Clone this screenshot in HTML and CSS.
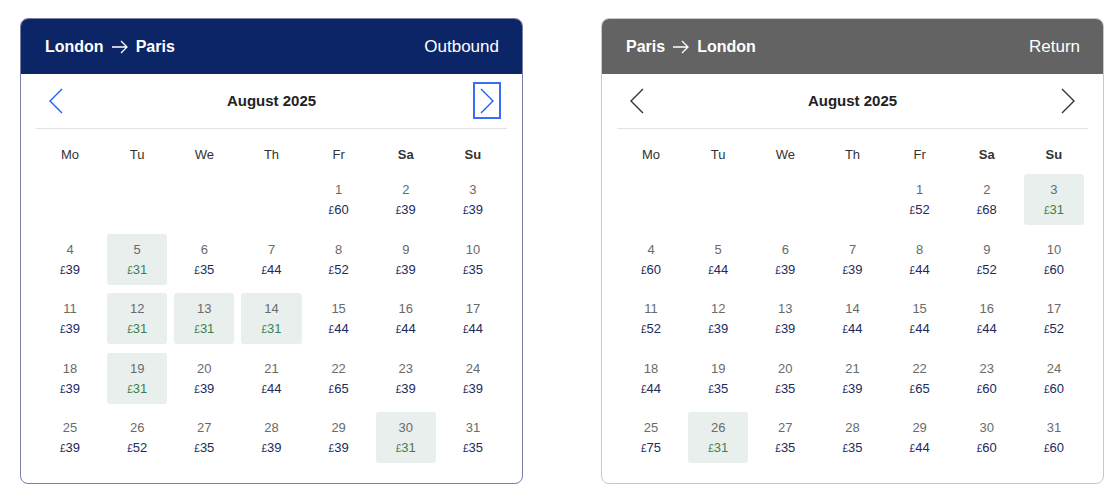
FILE: index.html
```html
<!DOCTYPE html>
<html lang="en">
<head>
    <meta charset="UTF-8">
    <title>Fare calendar</title>
    <link rel="stylesheet" href="styles.css">
</head>
<body>

    <div class="calendars">

        <div class="panel outbound">
            <div class="panel-head">
                <div class="route">London
                    <svg class="route-arrow" width="18" height="14" viewBox="0 0 18 14"><path d="M1 7h15M10 1l6 6-6 6" fill="none" stroke="currentColor" stroke-width="1.3"/></svg>
                    Paris</div>
                <div class="leg">Outbound</div>
            </div>
            <div class="nav">
                <button class="nav-btn"><svg width="14" height="26" viewBox="0 0 14 26"><path d="M13 1L1 13l12 12" fill="none" stroke="currentColor" stroke-width="1.4"/></svg></button>
                <div class="month">August 2025</div>
                <button class="nav-btn focused"><svg width="14" height="26" viewBox="0 0 14 26"><path d="M1 1l12 12L1 25" fill="none" stroke="currentColor" stroke-width="1.4"/></svg></button>
            </div>
            <div class="weekdays">
                <div>Mo</div><div>Tu</div><div>We</div><div>Th</div><div>Fr</div><div class="weekend">Sa</div><div class="weekend">Su</div>
            </div>
            <div class="days" id="outDays"></div>
        </div>

        <div class="panel return">
            <div class="panel-head">
                <div class="route">Paris
                    <svg class="route-arrow" width="18" height="14" viewBox="0 0 18 14"><path d="M1 7h15M10 1l6 6-6 6" fill="none" stroke="currentColor" stroke-width="1.3"/></svg>
                    London</div>
                <div class="leg">Return</div>
            </div>
            <div class="nav">
                <button class="nav-btn"><svg width="14" height="26" viewBox="0 0 14 26"><path d="M13 1L1 13l12 12" fill="none" stroke="currentColor" stroke-width="1.4"/></svg></button>
                <div class="month">August 2025</div>
                <button class="nav-btn"><svg width="14" height="26" viewBox="0 0 14 26"><path d="M1 1l12 12L1 25" fill="none" stroke="currentColor" stroke-width="1.4"/></svg></button>
            </div>
            <div class="weekdays">
                <div>Mo</div><div>Tu</div><div>We</div><div>Th</div><div>Fr</div><div class="weekend">Sa</div><div class="weekend">Su</div>
            </div>
            <div class="days" id="retDays"></div>
        </div>

    </div>

    <script>
        // August 2025 starts on a Friday
        var outPrices = [60,39,39, 39,31,35,44,52,39,35, 39,31,31,31,44,44,44, 39,31,39,44,65,39,39, 39,52,35,39,39,31,35];
        var retPrices = [52,68,31, 60,44,39,39,44,52,60, 52,39,39,44,44,44,52, 44,35,35,39,65,60,60, 75,31,35,35,44,60,60];

        function remplir(id, prices) {
            var html = "";
            for (var i = 0; i < 4; i++) {
                html += '<div class="day empty"></div>';
            }
            var cheapest = Math.min.apply(null, prices);
            for (var d = 1; d <= 31; d++) {
                var p = prices[d - 1];
                var cls = p === cheapest ? "day cheap" : "day";
                html += '<div class="' + cls + '"><span class="num">' + d + '</span>' +
                        '<span class="price"><small>£</small>' + p + '</span></div>';
            }
            document.getElementById(id).innerHTML = html;
        }

        remplir("outDays", outPrices);
        remplir("retDays", retPrices);
    </script>

</body>
</html>
```

FILE: styles.css
```css
* {
    box-sizing: border-box;
    margin: 0;
    padding: 0;
}

body {
    background: white;
    font-family: "Liberation Sans", Arial, sans-serif;
    padding: 18px 0 0 20px;
}

.calendars {
    display: flex;
    gap: 78px;
}

.panel {
    width: 503px;
    border: 1px solid #c8c8c8;
    border-radius: 8px;
    overflow: hidden;
    padding-bottom: 20px;
}

.outbound {
    border-color: #7a7fa8;
}

.panel-head {
    height: 55px;
    display: flex;
    align-items: center;
    justify-content: space-between;
    padding: 0 23px 0 24px;
    color: white;
    font-size: 16px;
}

.outbound .panel-head {
    background: #0c2566;
}

.return .panel-head {
    background: #636363;
}

.route {
    font-weight: bold;
    display: flex;
    align-items: center;
    gap: 7px;
}

.route-arrow {
    margin-top: 1px;
}

.leg {
    font-size: 17px;
}

.nav {
    height: 55px;
    margin: 0 15px;
    padding: 0 6px 1px;
    border-bottom: 1px solid #e2e2e2;
    display: flex;
    align-items: center;
    justify-content: space-between;
}

.nav-btn {
    width: 28px;
    height: 37px;
    border: 2px solid transparent;
    background: none;
    display: flex;
    align-items: center;
    justify-content: center;
    color: #333;
    cursor: pointer;
}

.outbound .nav-btn {
    color: #1f5ff5;
}

.nav-btn.focused {
    border-color: #3a6cf4;
}

.month {
    font-size: 15px;
    font-weight: bold;
    color: #222;
}

.weekdays {
    display: grid;
    grid-template-columns: repeat(7, 1fr);
    column-gap: 7px;
    padding: 18px 19px 11px;
    font-size: 13px;
    line-height: 16px;
    color: #333;
    text-align: center;
}

.weekend {
    font-weight: bold;
}

.days {
    display: grid;
    grid-template-columns: repeat(7, 1fr);
    grid-auto-rows: 51px;
    column-gap: 7px;
    row-gap: 8.5px;
    padding: 0 19px;
}

.day {
    display: flex;
    flex-direction: column;
    align-items: center;
    gap: 2px;
    padding-top: 7px;
    border-radius: 3px;
    font-size: 13px;
    line-height: 18px;
}

.num {
    color: #6a6a6a;
}

.price {
    color: #1c2a5c;
}

.price small {
    font-size: 10px;
}

.cheap {
    background: #e8efed;
}

.cheap .price {
    color: #3c7f52;
}
```
